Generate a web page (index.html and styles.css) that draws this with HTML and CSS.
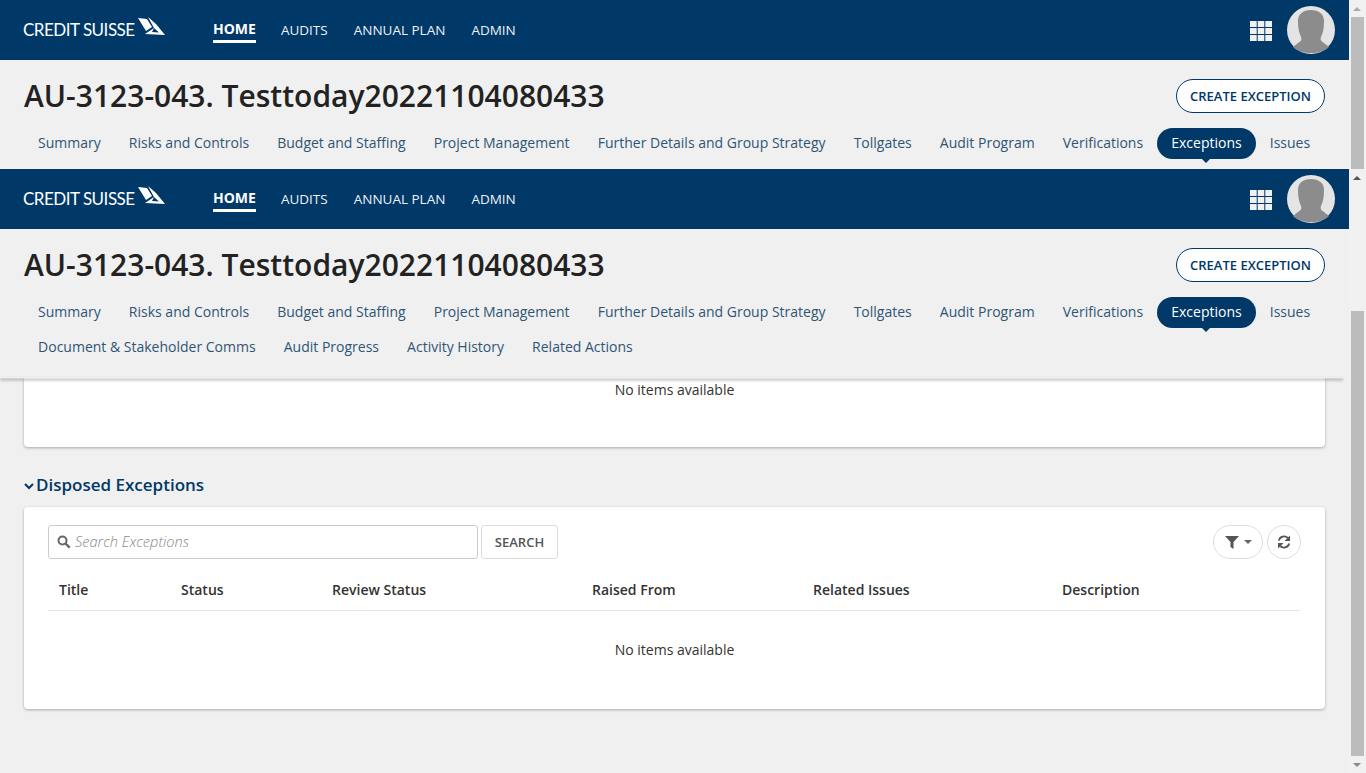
FILE: index.html
```html
<!DOCTYPE html>
<html lang="en">
<head>
    <meta charset="UTF-8">
    <title>AU-3123-043. Testtoday20221104080433</title>
    <link rel="stylesheet" href="styles.css">
</head>
<body>
    <div class="page">
        <div class="screen">
            <!-- top copy of the sticky header -->
            <div class="header">
                <div class="topbar">
                    <div class="logo">
                        <span class="logo-text">CREDIT SUISSE</span>
                        <svg class="logo-sails" width="27" height="19" viewBox="0 0 27 19"><path fill="#fff" fill-rule="evenodd" d="M0 1 L9 2 L14 10 L8 14 Z M10 0 L18 7 L27 18 L7 17 L13 13 L16 11 Z M16 11 L14 15 L21 15.500 Z"/></svg>
                    </div>
                    <nav class="mainnav">
                        <a class="active" href="#">HOME</a>
                        <a href="#">AUDITS</a>
                        <a href="#">ANNUAL PLAN</a>
                        <a href="#">ADMIN</a>
                    </nav>
                    <svg class="apps" width="22" height="20" viewBox="0 0 22 20"><path fill="#f0f0f0" d="M0 0h6.700v6H0zM7.700 0h6.600v6H7.700zM15.300 0H22v6h-6.700zM0 7h6.700v6H0zM7.700 7h6.600v6H7.700zM15.300 7H22v6h-6.700zM0 14h6.700v6H0zM7.700 14h6.600v6H7.700zM15.300 14H22v6h-6.700z"/></svg>
                    <svg class="avatar" width="48" height="48" viewBox="0 0 48 48"><circle cx="24" cy="24" r="24" fill="#e4e4e4"/><path fill="#8c8c8c" d="M24 4c8 0 13 4 13 11 0 7-1 12-3 16-1 3 0 4 3 6l5 4c-4 4-11 6-18 6s-14-2-18-6l5-4c3-2 4-3 3-6-2-4-3-9-3-16C11 8 16 4 24 4z"/></svg>
                </div>
                <div class="titlerow">
                    <h1>AU-3123-043. Testtoday20221104080433</h1>
                    <a class="btn-create" href="#">CREATE EXCEPTION</a>
                </div>
                <div class="tabs">
                    <a href="#">Summary</a>
                    <a href="#">Risks and Controls</a>
                    <a href="#">Budget and Staffing</a>
                    <a href="#">Project Management</a>
                    <a href="#">Further Details and Group Strategy</a>
                    <a href="#">Tollgates</a>
                    <a href="#">Audit Program</a>
                    <a href="#">Verifications</a>
                    <a class="active" href="#">Exceptions</a>
                    <a href="#">Issues</a>
                </div>
            </div>

            <!-- second copy, scrolled page -->
            <div class="header header-stuck">
                <div class="topbar">
                    <div class="logo">
                        <span class="logo-text">CREDIT SUISSE</span>
                        <svg class="logo-sails" width="27" height="19" viewBox="0 0 27 19"><path fill="#fff" fill-rule="evenodd" d="M0 1 L9 2 L14 10 L8 14 Z M10 0 L18 7 L27 18 L7 17 L13 13 L16 11 Z M16 11 L14 15 L21 15.500 Z"/></svg>
                    </div>
                    <nav class="mainnav">
                        <a class="active" href="#">HOME</a>
                        <a href="#">AUDITS</a>
                        <a href="#">ANNUAL PLAN</a>
                        <a href="#">ADMIN</a>
                    </nav>
                    <svg class="apps" width="22" height="20" viewBox="0 0 22 20"><path fill="#f0f0f0" d="M0 0h6.700v6H0zM7.700 0h6.600v6H7.700zM15.300 0H22v6h-6.700zM0 7h6.700v6H0zM7.700 7h6.600v6H7.700zM15.300 7H22v6h-6.700zM0 14h6.700v6H0zM7.700 14h6.600v6H7.700zM15.300 14H22v6h-6.700z"/></svg>
                    <svg class="avatar" width="48" height="48" viewBox="0 0 48 48"><circle cx="24" cy="24" r="24" fill="#e4e4e4"/><path fill="#8c8c8c" d="M24 4c8 0 13 4 13 11 0 7-1 12-3 16-1 3 0 4 3 6l5 4c-4 4-11 6-18 6s-14-2-18-6l5-4c3-2 4-3 3-6-2-4-3-9-3-16C11 8 16 4 24 4z"/></svg>
                </div>
                <div class="titlerow">
                    <h1>AU-3123-043. Testtoday20221104080433</h1>
                    <a class="btn-create" href="#">CREATE EXCEPTION</a>
                </div>
                <div class="tabs">
                    <a href="#">Summary</a>
                    <a href="#">Risks and Controls</a>
                    <a href="#">Budget and Staffing</a>
                    <a href="#">Project Management</a>
                    <a href="#">Further Details and Group Strategy</a>
                    <a href="#">Tollgates</a>
                    <a href="#">Audit Program</a>
                    <a href="#">Verifications</a>
                    <a class="active" href="#">Exceptions</a>
                    <a href="#">Issues</a>
                    <a href="#">Document &amp; Stakeholder Comms</a>
                    <a href="#">Audit Progress</a>
                    <a href="#">Activity History</a>
                    <a href="#">Related Actions</a>
                </div>
            </div>

            <div class="content">
                <div class="card card-cut">
                    <div class="empty">No items available</div>
                </div>

                <h2 class="section-title">
                    <svg width="10" height="7" viewBox="0 0 10 7"><path fill="none" stroke="#003868" stroke-width="2" d="M1 1l4 4 4-4"/></svg>
                    Disposed Exceptions
                </h2>

                <div class="card">
                    <div class="toolbar">
                        <div class="search">
                            <svg width="14" height="14" viewBox="0 0 14 14"><circle cx="5.500" cy="5.500" r="4" fill="none" stroke="#666" stroke-width="2"/><path stroke="#666" stroke-width="2.400" d="M8.500 8.500l4.200 4.200"/></svg>
                            <span>Search Exceptions</span>
                        </div>
                        <button class="btn-search">SEARCH</button>
                        <div class="tools">
                            <button class="btn-filter">
                                <svg width="14" height="13" viewBox="0 0 14 13"><path fill="#555" d="M0 0h14L8.500 6v7L5.500 11V6z"/></svg>
                                <svg width="8" height="4" viewBox="0 0 8 4"><path fill="#666" d="M0 0h8L4 4z"/></svg>
                            </button>
                            <button class="btn-refresh">
                                <svg width="14" height="14" viewBox="0 0 14 14"><path fill="none" stroke="#555" stroke-width="1.800" d="M1.800 5.500A5.400 5.400 0 0 1 11 3.200M12.200 8.500A5.400 5.400 0 0 1 3 10.800"/><path fill="#555" d="M13 0.500V6H7.500zM1 13.500V8h5.500z"/></svg>
                            </button>
                        </div>
                    </div>
                    <div class="table-head">
                        <div class="col-title">Title</div>
                        <div class="col-status">Status</div>
                        <div class="col-review">Review Status</div>
                        <div class="col-raised">Raised From</div>
                        <div class="col-related">Related Issues</div>
                        <div class="col-desc">Description</div>
                    </div>
                    <div class="empty">No items available</div>
                </div>
            </div>
        </div>

        <!-- scrollbars of the two captured frames -->
        <div class="scrollbars">
            <div class="scrollbar scrollbar-top">
                <div class="arrow arrow-up"></div>
                <div class="thumb"></div>
            </div>
            <div class="scrollbar scrollbar-bottom">
                <div class="arrow arrow-up"></div>
                <div class="spacer"></div>
                <div class="thumb"></div>
                <div class="arrow arrow-down"></div>
            </div>
        </div>
    </div>
</body>
</html>
```

FILE: styles.css
```css
/* General */
html, body {
    margin: 0;
    padding: 0;
    height: 773px;
    overflow: hidden;
}

body {
    background-color: #f0f0f0;
    color: #333;
    font-family: "Open Sans", sans-serif;
    font-size: 14px;
}

a {
    text-decoration: none;
}

button {
    font-family: inherit;
    cursor: pointer;
}

.page {
    display: flex;
    height: 773px;
}

.screen {
    width: 1349px;
    display: flex;
    flex-direction: column;
}

/* Header */
.header {
    background-color: #f0f0f0;
    height: 169px;
    overflow: hidden;
    flex: none;
}

.header-stuck {
    height: 209px;
    overflow: visible;
    position: relative;
    z-index: 2;
}

/* the shadow stops a few pixels short of the scrollbar */
.header-stuck::after {
    content: "";
    position: absolute;
    left: 0;
    right: 6px;
    bottom: 0;
    height: 1px;
    box-shadow: 0 2px 3px rgba(0, 0, 0, 0.55);
}

.topbar {
    height: 60px;
    background-color: #003868;
    display: flex;
    align-items: center;
    padding: 0 14px 0 23px;
}

.logo {
    width: 190px;
    display: flex;
    align-items: flex-start;
}

.logo-text {
    color: #fff;
    font-family: "Lato", sans-serif;
    font-size: 17px;
    line-height: 20px;
    letter-spacing: -0.5px;
    white-space: nowrap;
}

.logo-sails {
    margin-left: 3px;
    margin-top: -3px;
}

.mainnav {
    display: flex;
    gap: 26px;
    flex: 1;
    align-self: stretch;
    align-items: center;
}

.mainnav a {
    color: #eef2f5;
    font-size: 13.5px;
    line-height: 19px;
}

.mainnav a.active {
    color: #fff;
    font-size: 14px;
    font-weight: 700;
    padding: 0 0 2px;
    border-bottom: 3px solid #fff;
    margin-top: 1px;
    margin-right: -1px;
}

.apps {
    margin-right: 15px;
    margin-top: 2px;
}

.titlerow {
    height: 68px;
    display: flex;
    align-items: center;
    justify-content: space-between;
    padding: 4px 24px 0;
    box-sizing: border-box;
}

h1 {
    margin: 0;
    color: #222;
    font-size: 30px;
    font-weight: 600;
    line-height: 40px;
}

.btn-create {
    border: 1px solid #003868;
    border-radius: 17px;
    background-color: #fff;
    color: #003868;
    font-size: 13px;
    font-weight: 600;
    line-height: 32px;
    padding: 0 13px;
}

.tabs {
    display: flex;
    flex-wrap: wrap;
    padding: 0 24px;
}

.tabs a {
    height: 31px;
    margin: 0 0 4px;
    padding: 0 14.06px;
    border-radius: 16px;
    color: #2f5575;
    font-size: 14px;
    line-height: 30px;
    position: relative;
}

.tabs a.active {
    background-color: #003868;
    color: #fff;
}

.tabs a.active::after {
    content: "";
    position: absolute;
    left: 50%;
    bottom: -4px;
    margin-left: -5px;
    border-left: 5px solid transparent;
    border-right: 5px solid transparent;
    border-top: 5px solid #003868;
}

/* Content */
.content {
    padding: 0 24px;
}

.card {
    background-color: #fff;
    border-radius: 4px;
    box-shadow: 0 1px 3px rgba(0, 0, 0, 0.3);
    padding: 18px 24px 0;
    height: 202px;
    box-sizing: border-box;
}

.card-cut {
    height: 69px;
    padding-top: 0;
    border-radius: 0 0 4px 4px;
}

.section-title {
    margin: 25px 0 9px 0;
    color: #003868;
    font-size: 17px;
    font-weight: 600;
    line-height: 26px;
    display: flex;
    align-items: center;
    gap: 2px;
    height: 26px;
}

.section-title svg {
    margin-top: 2px;
}

.empty {
    text-align: center;
    line-height: 24px;
    color: #333;
}

.card .table-head + .empty {
    margin-top: 27px;
}

.toolbar {
    display: flex;
    align-items: center;
    height: 34px;
}

.search {
    width: 430px;
    height: 34px;
    box-sizing: border-box;
    border: 1px solid #ccc;
    border-radius: 3px;
    display: flex;
    align-items: center;
    gap: 4px;
    padding: 0 0 2px 8px;
    color: #888;
    font-size: 14.6px;
    font-style: italic;
    font-weight: 300;
}

.search svg {
    margin-top: 2px;
}

.btn-search {
    width: 77px;
    height: 34px;
    margin-left: 3px;
    border: 1px solid #ddd;
    border-radius: 3px;
    background-color: #fff;
    color: #555;
    font-size: 13px;
    font-weight: 600;
}

.tools {
    margin-left: auto;
    display: flex;
    gap: 4px;
}

.btn-filter, .btn-refresh {
    height: 34px;
    border: 1px solid #ddd;
    border-radius: 17px;
    background-color: #fff;
    display: flex;
    align-items: center;
    justify-content: center;
    padding: 0;
}

.btn-filter {
    width: 50px;
    gap: 5px;
}

.btn-refresh {
    width: 34px;
}

.table-head {
    display: grid;
    grid-template-columns: 122px 151px 260px 221px 249px 1fr;
    height: 52px;
    align-items: center;
    box-sizing: border-box;
    padding: 9px 11px 0;
    border-bottom: 1px solid #e6e6e6;
    margin-right: 1px;
    font-weight: 600;
    color: #333;
}

/* Scrollbars */
.scrollbars {
    width: 17px;
    display: flex;
    flex-direction: column;
    background-color: #f1f1f1;
}

.scrollbar {
    display: flex;
    flex-direction: column;
    align-items: center;
}

.scrollbar-top {
    height: 169px;
}

.scrollbar-bottom {
    height: 604px;
}

.scrollbar-top .thumb {
    height: 152px;
}

.scrollbar-bottom .spacer {
    height: 125px;
}

.scrollbar-bottom .thumb {
    height: 445px;
}

.thumb {
    width: 13px;
    background-color: #bcbcbc;
    flex: none;
}

.arrow {
    height: 17px;
    width: 17px;
    flex: none;
    position: relative;
}

.arrow::after {
    content: "";
    position: absolute;
    left: 4px;
    border-left: 4px solid transparent;
    border-right: 4px solid transparent;
}

.arrow-up::after {
    top: 7px;
    border-bottom: 4px solid #555;
}

.arrow-down::after {
    top: 7px;
    border-top: 4px solid #888;
}

.scrollbar-top .arrow-up::after {
    border-bottom-color: #aaa;
}
```
